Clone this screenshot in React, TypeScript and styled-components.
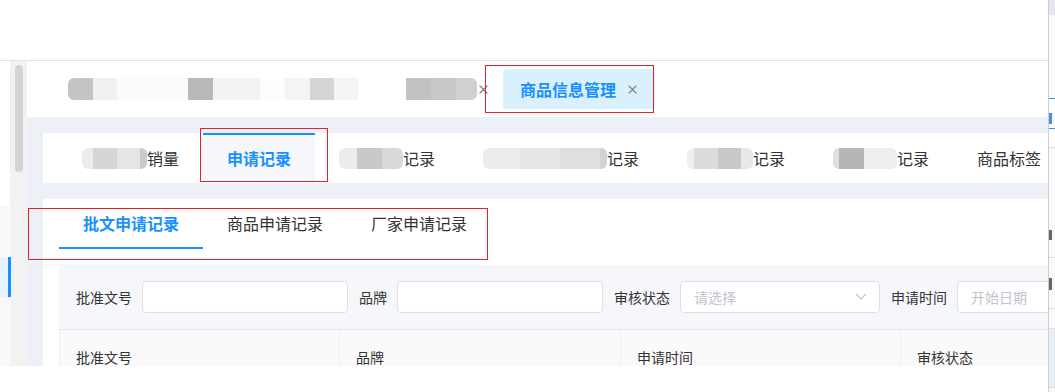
import React from "react";
import styled, { createGlobalStyle } from "styled-components";

const Global = createGlobalStyle`
  html, body { margin: 0; padding: 0; background: #ffffff; }
  body { font-family: "Noto Sans CJK SC", "Noto Sans", "Liberation Sans", sans-serif; color: #333; }
  * { box-sizing: border-box; }
`;

const BLUE = "#1890ff";

const Root = styled.div`
  position: relative;
  width: 1055px;
  height: 392px;
  overflow: hidden;
  background: #fff;
`;

const TopBlank = styled.div`
  height: 60px;
  width: 1048px;
  background: #fff;
`;

const Frame = styled.div`
  display: flex;
  width: 1048px;
  height: 306px;
  border-top: 1px solid #e3e3e3;
  overflow: hidden;
`;

const Sidebar = styled.div`
  width: 11px;
  display: flex;
  flex-direction: column;
  background: #fff;
`;

const SideTop = styled.div`
  height: 144px;
  border-right: 1px solid #f0f0f0;
`;

const SideMenu = styled.div`
  flex: 1;
  background: #f9f9f9;
  padding-top: 52px;
`;

const SideItem = styled.div`
  height: 40px;
  background: #e6f4ff;
  border-right: 3px solid ${BLUE};
`;

const ScrollTrack = styled.div`
  width: 16px;
  background: #f2f2f2;
  padding: 4px 4px 0;
`;

const Thumb = styled.div`
  height: 107px;
  border-radius: 4px;
  background: #d4d4d4;
`;

const Main = styled.div`
  flex: 1;
  display: flex;
  flex-direction: column;
  overflow: hidden;
  min-width: 0;
`;

const TagBar = styled.div`
  height: 56px;
  flex: none;
  display: flex;
  align-items: center;
  gap: 15px;
  padding-left: 41px;
  background: #fff;
`;

const Tag = styled.div`
  display: flex;
  align-items: center;
  gap: 2px;
`;

const ActiveTag = styled.div`
  display: flex;
  align-items: center;
  gap: 12px;
  height: 40px;
  padding: 0 18px 0 17px;
  border-radius: 4px;
  background: #d9f0fd;
  color: ${BLUE};
  font-size: 16px;
  font-weight: 700;
  white-space: nowrap;
`;

const Smudge = styled.span<{ $h: number }>`
  display: inline-flex;
  height: ${(p) => p.$h}px;
  border-radius: 6px;
  overflow: hidden;
  flex: none;
`;

const Seg = styled.span<{ $w: number; $c: string }>`
  display: block;
  width: ${(p) => p.$w}px;
  height: 100%;
  background: ${(p) => p.$c};
`;

const Content = styled.div`
  flex: 1;
  display: flex;
  flex-direction: column;
  gap: 16px;
  padding: 16px 0 0 16px;
  background: #edf0f7;
  min-height: 0;
`;

const TabCard = styled.div`
  height: 50px;
  flex: none;
  display: flex;
  padding-left: 15px;
  background: #fff;
  width: 1100px;
`;

const Tab = styled.div<{ $active?: boolean }>`
  display: flex;
  align-items: center;
  height: 50px;
  padding: 0 24px;
  border-top: 2px solid ${(p) => (p.$active ? BLUE : "transparent")};
  background: ${(p) => (p.$active ? "#f5f7fb" : "transparent")};
  color: ${(p) => (p.$active ? BLUE : "#333")};
  font-size: 16px;
  font-weight: ${(p) => (p.$active ? 700 : 400)};
  white-space: nowrap;
  padding-bottom: 2px;
`;

const PageCard = styled.div`
  flex: 1;
  background: #fff;
  padding-left: 16px;
  width: 1100px;
  display: flex;
  flex-direction: column;
`;

const SubTabs = styled.div`
  display: flex;
  height: 50px;
  flex: none;
`;

const SubTab = styled.div<{ $active?: boolean }>`
  height: 50px;
  line-height: 48px;
  padding: 0 24px;
  border-bottom: 2px solid ${(p) => (p.$active ? BLUE : "transparent")};
  color: ${(p) => (p.$active ? BLUE : "#333")};
  font-size: 16px;
  font-weight: ${(p) => (p.$active ? 700 : 400)};
  white-space: nowrap;
`;

const FilterBar = styled.div`
  margin-top: 16px;
  height: 65px;
  flex: none;
  display: flex;
  align-items: center;
  gap: 11px;
  padding: 0 0 1px 17px;
  background: #f5f7fb;
  border-bottom: 1px solid #e4e7ed;
`;

const Field = styled.div`
  display: flex;
  align-items: center;
  gap: 10px;
`;

const Label = styled.span`
  font-size: 14px;
  color: #333;
  white-space: nowrap;
`;

const Input = styled.div<{ $w: number }>`
  width: ${(p) => p.$w}px;
  height: 32px;
  display: flex;
  align-items: center;
  justify-content: space-between;
  padding: 0 12px 0 13px;
  border: 1px solid #dcdfe6;
  border-radius: 4px;
  background: #fff;
  color: #c0c4cc;
  font-size: 14px;
  white-space: nowrap;
`;

const TableHead = styled.div`
  display: grid;
  grid-template-columns: 280px 281px 280px 280px;
  border-left: 1px solid #ebeef5;
  background: #fafafa;
  flex: none;
`;

const HeadCell = styled.div`
  height: 52px;
  display: flex;
  align-items: center;
  padding-left: 16px;
  border-right: 1px solid #ebeef5;
  font-size: 14px;
  color: #333;
  padding-top: 2px;
`;

const RedBox = styled.div<{ $x: number; $y: number; $w: number; $h: number }>`
  position: absolute;
  left: ${(p) => p.$x}px;
  top: ${(p) => p.$y}px;
  width: ${(p) => p.$w}px;
  height: ${(p) => p.$h}px;
  border: 1.5px solid #e2232a;
  pointer-events: none;
`;

const Strip = styled.div`
  position: absolute;
  left: 1048px;
  top: 0;
  width: 7px;
  height: 392px;
  display: flex;
  flex-direction: column;
  border-left: 1px solid #cfcfcf;
  background: #f8f8f8;
`;

const Band = styled.div<{ $h: number; $c: string }>`
  height: ${(p) => p.$h}px;
  flex: none;
  background: ${(p) => p.$c};
`;

const Glyph = styled.div<{ $h: number; $c: string }>`
  height: ${(p) => p.$h}px;
  width: 3px;
  flex: none;
  background: ${(p) => p.$c};
`;

const Close = ({ color = "#808080" }: { color?: string }) => (
  <svg width="9" height="9" viewBox="0 0 9 9" style={{ flex: "none" }}>
    <path d="M1 1L8 8M8 1L1 8" stroke={color} strokeWidth="1.2" strokeLinecap="round" />
  </svg>
);

const Chevron = () => (
  <svg width="12" height="7" viewBox="0 0 12 7">
    <path d="M1 1L6 6L11 1" fill="none" stroke="#c0c4cc" strokeWidth="1.1" />
  </svg>
);

type S = [number, string][];

const Blur = ({ segs, h }: { segs: S; h: number }) => (
  <Smudge $h={h}>
    {segs.map(([w, c], i) => (
      <Seg key={i} $w={w} $c={c} />
    ))}
  </Smudge>
);

const tagSegs: S = [
  [25, "#c4c4c4"], [24, "#f1f1f4"], [71, "#fbfbfc"], [25, "#b9b9b9"], [47, "#f3f3f3"],
  [25, "#fdfdfd"], [25, "#f4f4f2"], [24, "#d5d5d3"], [24, "#f4f4f4"], [48, "#ffffff"],
  [25, "#c2c2c2"], [25, "#c8c8c8"], [21, "#d0d0d0"],
];

const tabs: { segs: S; text: string }[] = [
  { segs: [[11, "#ececec"], [24, "#d6d6d6"], [23, "#e6e6e6"], [7, "#cacaca"]], text: "销量" },
  { segs: [[18, "#ececec"], [25, "#c9c9c9"], [21, "#d9d9d9"]], text: "记录" },
  { segs: [[37, "#ececec"], [40, "#e7e7e7"], [40, "#e0e0e0"], [7, "#d2d2d2"]], text: "记录" },
  { segs: [[7, "#f0f0f0"], [24, "#dcdcdc"], [23, "#c8c8c8"], [12, "#e8e8e8"]], text: "记录" },
  { segs: [[6, "#e0e0e0"], [25, "#b6b6b6"], [33, "#eeeeee"]], text: "记录" },
];

export default function App() {
  return (
    <Root>
      <Global />
      <TopBlank />
      <Frame>
        <Sidebar>
          <SideTop />
          <SideMenu>
            <SideItem />
          </SideMenu>
        </Sidebar>
        <ScrollTrack>
          <Thumb />
        </ScrollTrack>
        <Main>
          <TagBar>
            <Tag>
              <Blur segs={tagSegs} h={22} />
              <Close />
            </Tag>
            <ActiveTag>
              商品信息管理
              <Close color="#7a8591" />
            </ActiveTag>
          </TagBar>
          <Content>
            <TabCard>
              <Tab>
                <Blur segs={tabs[0].segs} h={21} />
                {tabs[0].text}
              </Tab>
              <Tab $active>申请记录</Tab>
              {tabs.slice(1).map((t, i) => (
                <Tab key={i}>
                  <Blur segs={t.segs} h={21} />
                  {t.text}
                </Tab>
              ))}
              <Tab>商品标签</Tab>
            </TabCard>
            <PageCard>
              <SubTabs>
                <SubTab $active>批文申请记录</SubTab>
                <SubTab>商品申请记录</SubTab>
                <SubTab>厂家申请记录</SubTab>
              </SubTabs>
              <FilterBar>
                <Field>
                  <Label>批准文号</Label>
                  <Input $w={206} />
                </Field>
                <Field>
                  <Label>品牌</Label>
                  <Input $w={206} />
                </Field>
                <Field>
                  <Label>审核状态</Label>
                  <Input $w={200}>
                    请选择
                    <Chevron />
                  </Input>
                </Field>
                <Field>
                  <Label>申请时间</Label>
                  <Input $w={220}>开始日期</Input>
                </Field>
              </FilterBar>
              <TableHead>
                <HeadCell>批准文号</HeadCell>
                <HeadCell>品牌</HeadCell>
                <HeadCell>申请时间</HeadCell>
                <HeadCell>审核状态</HeadCell>
              </TableHead>
            </PageCard>
          </Content>
        </Main>
      </Frame>
      <RedBox $x={485} $y={65} $w={169} $h={48} />
      <RedBox $x={200} $y={128} $w={128} $h={54} />
      <RedBox $x={28} $y={208} $w={460} $h={52} />
      <Strip>
        <Band $h={15} $c="#e5e8f3" />
        <Band $h={83} $c="#fafafa" />
        <Band $h={1} $c="#3d8ff0" />
        <Band $h={14} $c="#ffffff" />
        <Glyph $h={11} $c="#4a90e2" />
        <Band $h={4} $c="#ffffff" />
        <Band $h={1} $c="#3d8ff0" />
        <Band $h={18} $c="#ffffff" />
        <Band $h={1} $c="#dddddd" />
        <Band $h={82} $c="#fafafa" />
        <Glyph $h={10} $c="#666666" />
        <Band $h={17} $c="#fafafa" />
        <Band $h={1} $c="#dddddd" />
        <Band $h={20} $c="#fafafa" />
        <Glyph $h={12} $c="#666666" />
        <Band $h={18} $c="#fafafa" />
        <Band $h={1} $c="#dddddd" />
        <Band $h={19} $c="#fafafa" />
        <Band $h={1} $c="#dddddd" />
        <Band $h={58} $c="#e9edf6" />
        <Band $h={1} $c="#dddddd" />
      </Strip>
    </Root>
  );
}
